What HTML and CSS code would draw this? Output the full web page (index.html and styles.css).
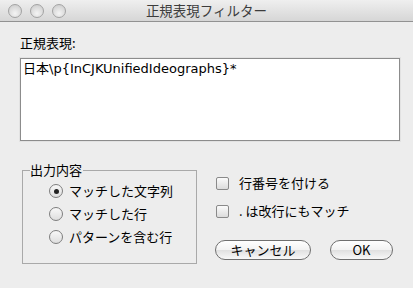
FILE: index.html
```html
<!DOCTYPE html>
<html lang="ja">
<head>
    <meta charset="UTF-8">
    <title>正規表現フィルター</title>
    <link rel="stylesheet" href="styles.css">
</head>
<body>
    <div class="window">
        <div class="titlebar">
            <div class="lights">
                <span class="light"></span>
                <span class="light"></span>
                <span class="light"></span>
            </div>
            <div class="title">正規表現フィルター</div>
        </div>
        <div class="content">
            <label class="field-label" for="pattern">正規表現:</label>
            <div class="pattern" id="pattern">日本\p{InCJKUnifiedIdeographs}*</div>
            <div class="bottom">
                <fieldset class="group">
                    <legend>出力内容</legend>
                    <div class="radio-row"><span class="radio checked"></span>マッチした文字列</div>
                    <div class="radio-row"><span class="radio"></span>マッチした行</div>
                    <div class="radio-row"><span class="radio"></span>パターンを含む行</div>
                </fieldset>
                <div class="side">
                    <div class="check-row"><span class="check"></span>行番号を付ける</div>
                    <div class="check-row"><span class="check"></span>. は改行にもマッチ</div>
                    <div class="buttons">
                        <button class="btn cancel">キャンセル</button>
                        <button class="btn ok">OK</button>
                    </div>
                </div>
            </div>
        </div>
    </div>
</body>
</html>
```

FILE: styles.css
```css
body {
    margin: 0;
    padding: 0;
    background: #ededed;
    font-family: "Noto Sans CJK JP", "DejaVu Sans", sans-serif;
    font-size: 13px;
    color: #000;
}
.window {
    width: 413px;
    height: 288px;
    background: #ededed;
    overflow: hidden;
}
.titlebar {
    height: 21px;
    border-bottom: 1px solid #929292;
    background: linear-gradient(#efefef, #d6d6d6);
    display: flex;
    align-items: center;
}
.lights {
    display: flex;
    gap: 8px;
    padding-left: 8px;
}
.light {
    width: 12px;
    height: 12px;
    border-radius: 50%;
    border: 1px solid #a3a3a3;
    background: radial-gradient(circle at 50% 70%, #f4f4f4 0%, #dcdcdc 55%, #c8c8c8 100%);
}
.title {
    flex: 1;
    text-align: center;
    margin-right: 66px;
    color: #3c3c3c;
    font-size: 13.5px;
    line-height: 21px;
}
.content {
    padding: 13px 13px 0 20px;
}
.field-label {
    display: block;
    line-height: 16px;
}
.pattern {
    margin-top: 7px;
    height: 77px;
    width: 374px;
    border: 1px solid #8c8c8c;
    box-shadow: 0 0 0 1px #e2e2e2;
    background: #fff;
    font-family: "DejaVu Sans", "Noto Sans CJK JP", sans-serif;
    font-size: 13px;
    line-height: 16px;
    padding: 2px;
}
.bottom {
    display: flex;
    gap: 19px;
    margin-top: 21px;
    margin-left: 2px;
}
.group {
    margin: 0;
    width: 175px;
    height: 102px;
    box-sizing: border-box;
    border: 1px solid #a9a9a9;
    padding: 0 0 0 7px;
}
.group legend {
    padding: 0 1px 0 0;
    line-height: 16px;
}
.radio-row {
    display: flex;
    align-items: center;
    gap: 6px;
    line-height: 16px;
    margin-top: 7px;
    padding-left: 19px;
}
.radio-row:first-of-type {
    margin-top: 5px;
}
.radio {
    width: 12px;
    height: 12px;
    border-radius: 50%;
    border: 1px solid #7e7e7e;
    background: linear-gradient(#f8f8f8, #dedede);
    position: relative;
}
.radio.checked::after {
    content: "";
    position: absolute;
    left: 3.5px;
    top: 3.5px;
    width: 5px;
    height: 5px;
    border-radius: 50%;
    background: #222;
}
.side {
    display: flex;
    flex-direction: column;
    padding-top: 13px;
}
.check-row {
    display: flex;
    align-items: center;
    gap: 10px;
    line-height: 16px;
}
.check-row + .check-row {
    margin-top: 12px;
}
.check {
    width: 11px;
    height: 11px;
    border: 1px solid #8a8a8a;
    border-radius: 2px;
    background: linear-gradient(#fbfbfb, #dcdcdc);
}
.buttons {
    display: flex;
    gap: 19px;
    margin-top: 21px;
    margin-left: -1px;
}
.btn {
    height: 20px;
    padding: 0;
    border: 1px solid #6f6f6f;
    border-radius: 10px;
    background: linear-gradient(#ffffff, #f2f2f2 50%, #e0e0e0 51%, #f8f8f8);
    font-family: "Noto Sans CJK JP", "DejaVu Sans", sans-serif;
    font-size: 13px;
    line-height: 18px;
    color: #000;
}
.cancel {
    width: 96px;
}
.ok {
    width: 63px;
}
```
